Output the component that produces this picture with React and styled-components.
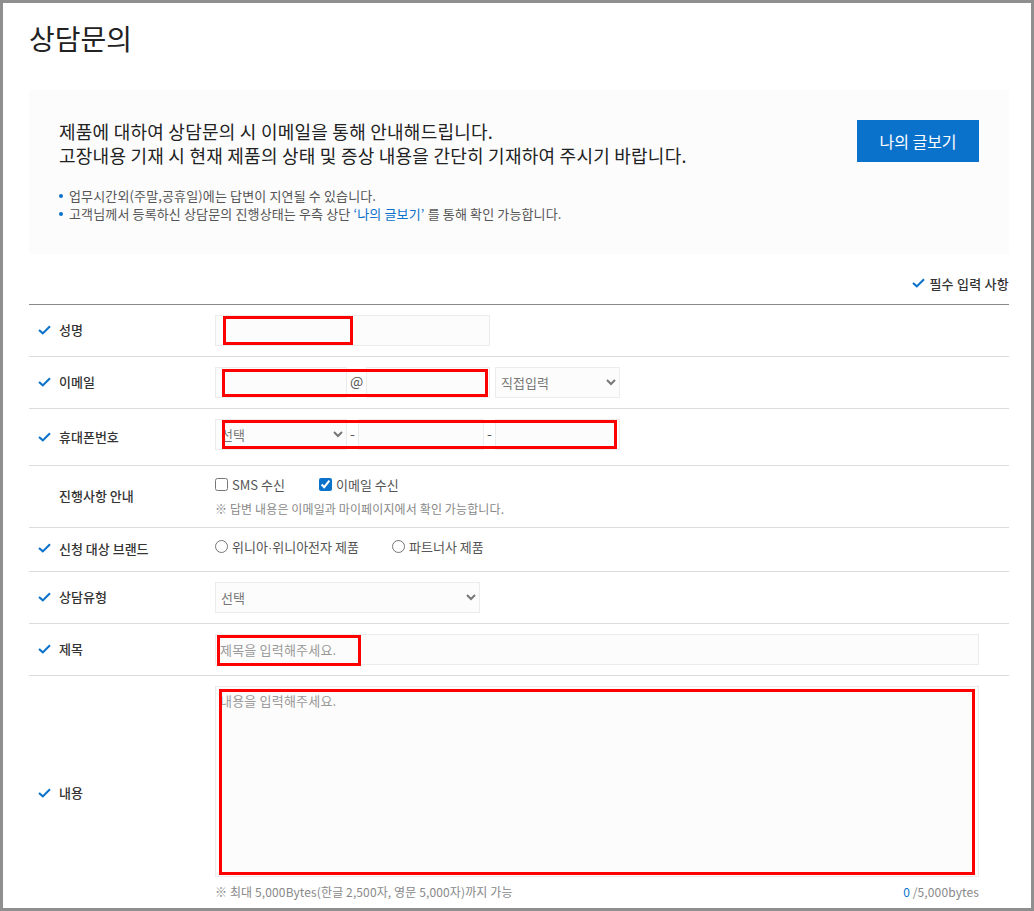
import React from "react";
import styled, { createGlobalStyle } from "styled-components";

const FONT = `"Noto Sans CJK KR", "Noto Sans", sans-serif`;
const BLUE = "#0b72cc";

const GlobalStyle = createGlobalStyle`
  html, body {
    margin: 0;
    padding: 0;
    background: #fff;
  }
  * {
    box-sizing: border-box;
  }
  body, input, select, textarea, button {
    font-family: ${FONT};
  }
`;

function Check() {
  return (
    <CheckSvg viewBox="0 0 13 10">
      <path d="M1 5 L4.8 8.4 L12 1.2" fill="none" stroke={BLUE} strokeWidth="2.1" />
    </CheckSvg>
  );
}

function App() {
  return (
    <Page>
      <GlobalStyle />
      <Title>상담문의</Title>

      <Notice>
        <div>
          <Lead>
            제품에 대하여 상담문의 시 이메일을 통해 안내해드립니다.
            <br />
            고장내용 기재 시 현재 제품의 상태 및 증상 내용을 간단히 기재하여 주시기 바랍니다.
          </Lead>
          <NoticeList>
            <li>업무시간외(주말,공휴일)에는 답변이 지연될 수 있습니다.</li>
            <li>
              고객님께서 등록하신 상담문의 진행상태는 우측 상단 <b>‘나의 글보기’</b> 를 통해 확인 가능합니다.
            </li>
          </NoticeList>
        </div>
        <MyPostsButton>나의 글보기</MyPostsButton>
      </Notice>

      <RequiredHint>
        <Check />
        필수 입력 사항
      </RequiredHint>

      <Form>
        <Row>
          <Label><Check />성명</Label>
          <Field>
            <TextInput $width={275} />
            <RedMark $left={8} $top={1} $width={130} $height={29} />
          </Field>
        </Row>

        <Row>
          <Label><Check />이메일</Label>
          <Field>
            <TextInput $width={132} />
            <Joint $width={19}>@</Joint>
            <TextInput $width={124} />
            <Select $width={125} $ml={5} defaultValue="direct">
              <option value="direct">직접입력</option>
            </Select>
            <RedMark $left={7} $top={2} $width={266} $height={28} />
          </Field>
        </Row>

        <Row $pb={15}>
          <Label $shift={2}><Check />휴대폰번호</Label>
          <Field>
            <Select $width={132} defaultValue="">
              <option value="">선택</option>
            </Select>
            <Joint $width={11}>-</Joint>
            <TextInput $width={126} />
            <Joint $width={11}>-</Joint>
            <TextInput $width={125} />
            <RedMark $left={7} $top={1} $width={395} $height={29} />
          </Field>
        </Row>

        <Row $pt={8} $pb={9}>
          <Label $indent>진행사항 안내</Label>
          <Stack>
            <ChoiceLine>
              <Choice $width={104}>
                <Box type="checkbox" />
                SMS 수신
              </Choice>
              <Choice>
                <Box type="checkbox" defaultChecked />
                이메일 수신
              </Choice>
            </ChoiceLine>
            <Caption $mt={6}>※ 답변 내용은 이메일과 마이페이지에서 확인 가능합니다.</Caption>
          </Stack>
        </Row>

        <Row $pt={8} $pb={15}>
          <Label $shift={2}><Check />신청 대상 브랜드</Label>
          <ChoiceLine>
            <Choice $width={177}>
              <Box type="radio" name="brand" />
              <span>위니아<MiddleDot>·</MiddleDot>위니아전자 제품</span>
            </Choice>
            <Choice>
              <Box type="radio" name="brand" />
              파트너사 제품
            </Choice>
          </ChoiceLine>
        </Row>

        <Row>
          <Label><Check />상담유형</Label>
          <Field>
            <Select $width={265} defaultValue="">
              <option value="">선택</option>
            </Select>
          </Field>
        </Row>

        <Row>
          <Label><Check />제목</Label>
          <Field>
            <TextInput $width={764} placeholder="제목을 입력해주세요." />
            <RedMark $left={2} $top={1} $width={144} $height={31} />
          </Field>
        </Row>

        <Row $last>
          <Label><Check />내용</Label>
          <Stack>
            <Field>
              <TextArea placeholder="내용을 입력해주세요." />
              <RedMark $left={4} $top={3} $width={756} $height={186} />
            </Field>
            <CountLine>
              <Caption>※ 최대 5,000Bytes(한글 2,500자, 영문 5,000자)까지 가능</Caption>
              <Caption><Count>0</Count> /5,000bytes</Caption>
            </CountLine>
          </Stack>
        </Row>
      </Form>
    </Page>
  );
}

export default App;

const Page = styled.div`
  width: 1034px;
  height: 911px;
  overflow: hidden;
  border: 3px solid #8f8f8f;
  padding: 0 22px 0 26px;
  background: #fff;
  color: #222;
`;

const Title = styled.h1`
  margin: 0;
  padding-top: 14px;
  height: 87px;
  font-size: 28px;
  line-height: 42px;
  font-weight: 400;
  color: #222;
`;

const Notice = styled.div`
  display: flex;
  justify-content: space-between;
  align-items: flex-start;
  height: 164px;
  padding: 30px 30px 0 30px;
  background: #fcfcfc;
`;

const Lead = styled.p`
  margin: -1px 0 0;
  font-size: 18px;
  line-height: 24px;
  letter-spacing: 0.24px;
  color: #222;
`;

const NoticeList = styled.ul`
  margin: 20px 0 0;
  padding: 0;
  list-style: none;
  font-size: 13px;
  line-height: 18px;
  letter-spacing: 0.14px;
  color: #555;

  li {
    position: relative;
    padding-left: 10px;
  }

  li::before {
    content: "";
    position: absolute;
    left: 0;
    top: 7px;
    width: 4px;
    height: 4px;
    border-radius: 50%;
    background: ${BLUE};
  }

  b {
    font-weight: 400;
    color: ${BLUE};
  }
`;

const MyPostsButton = styled.button`
  width: 122px;
  height: 42px;
  border: 0;
  padding: 0;
  background: ${BLUE};
  color: #fff;
  font-size: 16px;
  cursor: pointer;
`;

const RequiredHint = styled.div`
  display: flex;
  justify-content: flex-end;
  align-items: center;
  gap: 4px;
  height: 50px;
  padding-top: 8px;
  font-size: 13px;
  font-weight: 500;
  letter-spacing: 0.25px;
  color: #333;
`;

const Form = styled.div`
  border-top: 1px solid #888;
`;

const CheckSvg = styled.svg`
  flex: none;
  width: 13px;
  height: 10px;
`;

const Row = styled.div`
  display: grid;
  grid-template-columns: 186px 1fr;
  align-items: center;
  padding: ${(p) => p.$pt ?? 10}px 30px ${(p) => p.$pb ?? 10}px 0;
  border-bottom: ${(p) => (p.$last ? "0" : "1px solid #dcdcdc")};
`;

const Label = styled.div`
  display: flex;
  align-items: center;
  gap: 8px;
  padding-left: ${(p) => (p.$indent ? 30 : 9)}px;
  transform: translateY(${(p) => p.$shift ?? -1}px);
  font-size: 13px;
  font-weight: 500;
  color: #333;
`;

const Field = styled.div`
  position: relative;
  display: flex;
`;

const TextInput = styled.input`
  width: ${(p) => p.$width}px;
  height: 31px;
  padding: 0 4px;
  border: 1px solid #ececec;
  background: #fcfcfc;
  font-size: 13px;
  letter-spacing: 0.2px;
  color: #666;
  outline: none;

  &::placeholder {
    color: #999;
  }
`;

const Joint = styled.span`
  width: ${(p) => p.$width}px;
  height: 31px;
  font-size: 14px;
  line-height: 29px;
  text-align: center;
  color: #555;
`;

const Select = styled.select`
  width: ${(p) => p.$width}px;
  height: 31px;
  margin-left: ${(p) => p.$ml ?? 0}px;
  padding: 0 1px;
  border: 1px solid #ececec;
  border-radius: 0;
  background: #fcfcfc;
  font-size: 13px;
  color: #777;
  outline: none;
`;

const TextArea = styled.textarea`
  display: block;
  width: 764px;
  height: 191px;
  padding: 4px;
  border: 1px solid #ececec;
  background: #fcfcfc;
  font-size: 13px;
  letter-spacing: 0.2px;
  resize: none;
  outline: none;

  &::placeholder {
    color: #999;
  }
`;

const RedMark = styled.div`
  position: absolute;
  left: ${(p) => p.$left}px;
  top: ${(p) => p.$top}px;
  width: ${(p) => p.$width}px;
  height: ${(p) => p.$height}px;
  border: 3px solid #f00;
  pointer-events: none;
`;

const Stack = styled.div`
  display: flex;
  flex-direction: column;
`;

const ChoiceLine = styled.div`
  display: flex;
  align-items: center;
  height: 20px;
`;

const Choice = styled.label`
  display: flex;
  align-items: center;
  width: ${(p) => (p.$width ? `${p.$width}px` : "auto")};
  gap: 4px;
  font-size: 13px;
  color: #555;
`;

const MiddleDot = styled.span`
  font-family: "Liberation Sans", sans-serif;
`;

const Box = styled.input`
  width: 13px;
  height: 13px;
  margin: 0;
  accent-color: ${BLUE};
`;

const Caption = styled.div`
  margin-top: ${(p) => p.$mt ?? 0}px;
  font-size: 12px;
  line-height: 18px;
  letter-spacing: 0.12px;
  color: #888;
`;

const CountLine = styled.div`
  display: flex;
  justify-content: space-between;
  margin-top: 6px;
`;

const Count = styled.span`
  color: ${BLUE};
`;
